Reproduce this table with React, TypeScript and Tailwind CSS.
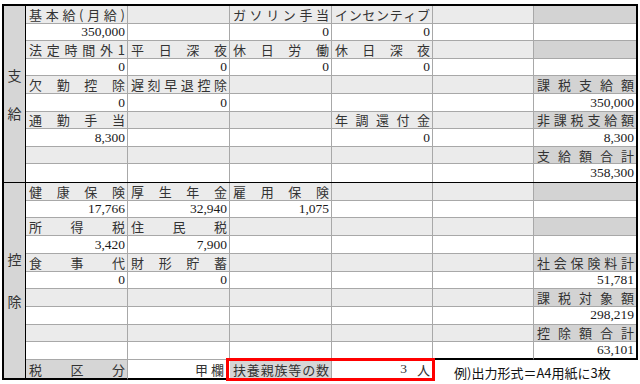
import React from 'react';

type Row = { label: boolean; cells: string[] };

const sec1: Row[] = [
  { label: true, cells: ['基本給(月給)', '', 'ガソリン手当', 'インセンティブ', '', ''] },
  { label: false, cells: ['350,000', '', '0', '0', '', ''] },
  { label: true, cells: ['法定時間外1', '平日深夜', '休日労働', '休日深夜', '', ''] },
  { label: false, cells: ['0', '0', '0', '0', '', ''] },
  { label: true, cells: ['欠勤控除', '遅刻早退控除', '', '', '', '課税支給額'] },
  { label: false, cells: ['0', '0', '', '', '', '350,000'] },
  { label: true, cells: ['通勤手当', '', '', '年調還付金', '', '非課税支給額'] },
  { label: false, cells: ['8,300', '', '', '0', '', '8,300'] },
  { label: true, cells: ['', '', '', '', '', '支給額合計'] },
  { label: false, cells: ['', '', '', '', '', '358,300'] },
];

const sec2: Row[] = [
  { label: true, cells: ['健康保険', '厚生年金', '雇用保険', '', '', ''] },
  { label: false, cells: ['17,766', '32,940', '1,075', '', '', ''] },
  { label: true, cells: ['所得税', '住民税', '', '', '', ''] },
  { label: false, cells: ['3,420', '7,900', '', '', '', ''] },
  { label: true, cells: ['食事代', '財形貯蓄', '', '', '', '社会保険料計'] },
  { label: false, cells: ['0', '0', '', '', '', '51,781'] },
  { label: true, cells: ['', '', '', '', '', '課税対象額'] },
  { label: false, cells: ['', '', '', '', '', '298,219'] },
  { label: true, cells: ['', '', '', '', '', '控除額合計'] },
  { label: false, cells: ['', '', '', '', '', '63,101'] },
];

const Spread = ({ text }: { text: string }) => (
  <div className="flex w-full justify-between pl-[3px] pr-[2px] text-[13px] leading-none text-[#333]">
    {Array.from(text).map((c, i) => (
      <span key={i}>{c}</span>
    ))}
  </div>
);

const Num = ({ text }: { text: string }) => (
  <div className="w-full pr-[2px] text-right font-['Liberation_Serif',serif] text-[13.5px] leading-none text-[#1a1a1a]">
    {text}
  </div>
);

const Grid = ({ rows, closing }: { rows: Row[]; closing: boolean }) => (
  <div className="grid h-full grid-cols-[102px_102px_102px_101px_101px_102px] grid-rows-10">
    {rows.map((row, r) =>
      row.cells.map((text, c) => {
        const bg = row.label ? (c === 5 ? 'bg-[#d3d3d3]' : 'bg-[#ebebeb]') : 'bg-white';
        const right = c < 5 ? 'border-r border-r-[#a8a8a8]' : '';
        let bottom = 'border-b border-b-[#a8a8a8]';
        if (r === rows.length - 1) {
          if (!closing) bottom = '';
          else if (c >= 4) bottom = 'border-b-2 border-b-black';
        }
        return (
          <div key={`${r}-${c}`} className={`flex items-center ${bg} ${right} ${bottom}`}>
            {text && (row.label ? <Spread text={text} /> : <Num text={text} />)}
          </div>
        );
      })
    )}
  </div>
);

const Side = ({ chars, gap }: { chars: string[]; gap: string }) => (
  <div className={`flex w-[22px] shrink-0 flex-col items-center justify-center border-r border-black bg-[#d6d6d6] text-[14px] leading-none text-[#333] ${gap}`}>
    {chars.map((c) => (
      <span key={c}>{c}</span>
    ))}
  </div>
);

export default function App() {
  return (
    <div className="h-[384px] w-[640px] overflow-hidden bg-white pl-[2px] pt-[4px] font-['Noto_Sans_CJK_JP',sans-serif]">
      <div className="w-[636px] border-l-2 border-t-2 border-black">
        {/* 支給 */}
        <div className="flex h-[176px]">
          <Side chars={['支', '給']} gap="gap-[24px]" />
          <div className="w-[612px] border-r-2 border-black">
            <Grid rows={sec1} closing={false} />
          </div>
        </div>

        {/* 控除 */}
        <div className="flex h-[198px] border-t border-black">
          <div className="flex h-[197px] w-[22px] shrink-0 flex-col items-center justify-center gap-[28px] border-b-2 border-r border-black bg-[#d6d6d6] pb-[2px] text-[14px] leading-none text-[#333]">
            <span>控</span>
            <span>除</span>
          </div>
          <div className="flex w-[612px] flex-col">
            <div className="h-[177px] border-r-2 border-black">
              <Grid rows={sec2} closing={true} />
            </div>
            <div className="flex h-[20px]">
              <div className="flex w-[102px] items-center border-b-2 border-r border-b-black border-r-[#a8a8a8] bg-[#d6d6d6]">
                <Spread text="税区分" />
              </div>
              <div className="flex w-[102px] items-center justify-end border-b-2 border-black bg-white pr-[6px] text-[13px] leading-none text-[#333]">
                <span>甲</span>
                <span className="ml-[3px]">欄</span>
              </div>
              <div className="relative flex w-[203px] border-b-2 border-black">
                <div className="flex w-[102px] items-center border-r border-[#a8a8a8] bg-[#d6d6d6]">
                  <Spread text="扶養親族等の数" />
                </div>
                <div className="flex flex-1 items-center justify-end bg-white pr-[3px] text-[13px] leading-none text-[#333]">
                  <span className="font-['Liberation_Serif',serif] text-[13.5px]">3</span>
                  <span className="ml-[10px]">人</span>
                </div>
                <div className="absolute -bottom-[3px] -left-[4px] -right-[2px] -top-[2px] border-[3px] border-[#ff0000]" />
              </div>
              <div className="flex flex-1 items-center pl-[21px] pt-[4px] text-[13px] leading-none text-[#111]">
                例)出力形式＝A4用紙に3枚
              </div>
            </div>
          </div>
        </div>
      </div>
    </div>
  );
}
